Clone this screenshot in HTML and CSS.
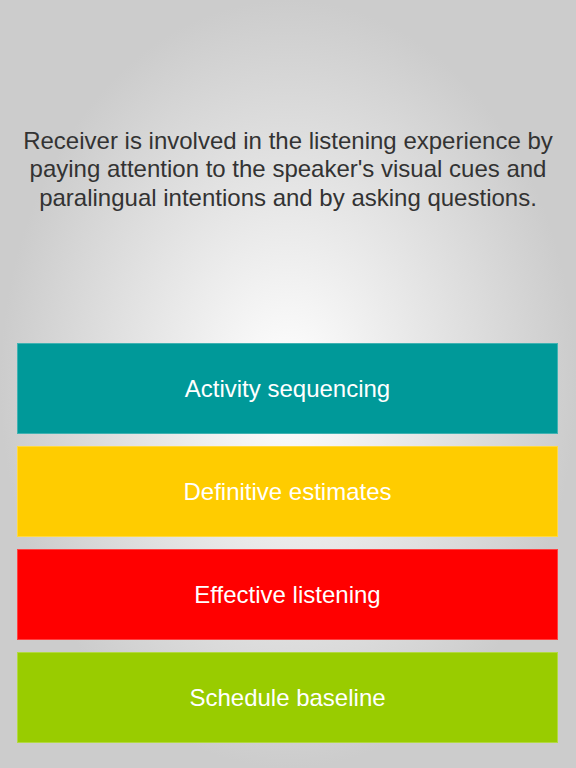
FILE: index.html
```html
<!DOCTYPE html>
<html lang="en">
<head>
  <meta charset="UTF-8">
  <meta name="viewport" content="width=device-width, initial-scale=1.0">
  <title>Quiz</title>
  <link rel="stylesheet" href="styles.css">
</head>
<body>
  <div class="screen">
    <div class="question">
      <p>Receiver is involved in the listening experience by paying attention to the speaker's visual cues and paralingual intentions and by asking questions.</p>
    </div>

    <div class="answers">
      <button class="answer teal">Activity sequencing</button>
      <button class="answer yellow">Definitive estimates</button>
      <button class="answer red">Effective listening</button>
      <button class="answer green">Schedule baseline</button>
    </div>
  </div>
</body>
</html>
```

FILE: styles.css
```css
html, body {
  margin: 0;
  padding: 0;
}

body {
  font-family: 'Liberation Sans', Arial, Helvetica, sans-serif;
  color: #333;
  background-color: #cccccc;
}

.screen {
  width: 576px;
  height: 768px;
  display: flex;
  flex-direction: column;
  background: radial-gradient(ellipse closest-side at 50% 50%, #ffffff, #cccccc);
}

.question {
  height: 343px;
  display: flex;
  align-items: center;
  justify-content: center;
  padding: 0 12px 4px;
  box-sizing: border-box;
}

.question p {
  margin: 0;
  font-size: 24px;
  line-height: 28.5px;
  text-align: center;
  color: #333;
}

.answers {
  display: flex;
  flex-direction: column;
  gap: 12px;
  padding: 0 18px 0 17px;
}

.answer {
  height: 91px;
  border: 1px solid rgba(255, 255, 255, 0.25);
  margin: 0;
  color: white;
  font-family: inherit;
  font-size: 24px;
  cursor: pointer;
}

.teal {
  background-color: #009999;
}

.yellow {
  background-color: #ffcc00;
}

.red {
  background-color: #ff0000;
}

.green {
  background-color: #99cc00;
}
```
